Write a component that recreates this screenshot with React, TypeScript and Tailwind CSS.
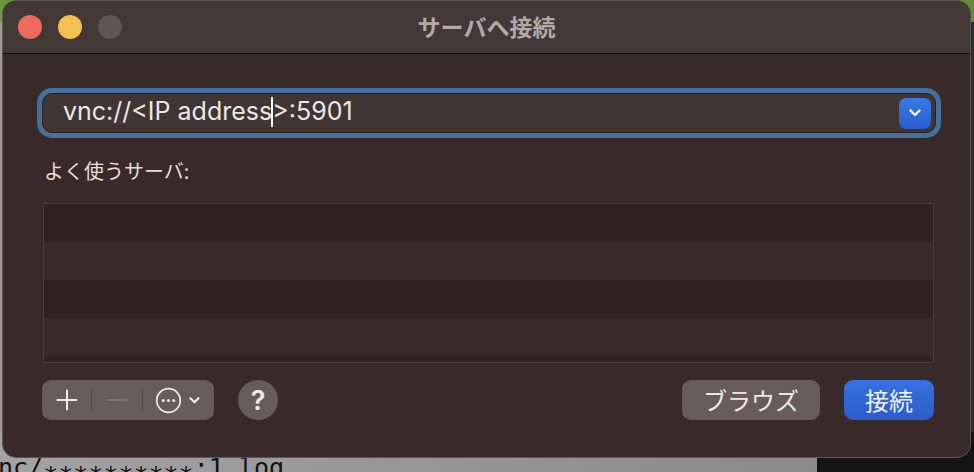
import React from 'react';

const jp = { fontFamily: '"Noto Sans CJK JP", "Noto Sans", sans-serif' };
const latin = { fontFamily: 'Inter, "Noto Sans CJK JP", sans-serif' };

const Chevron: React.FC<{ className?: string }> = ({ className }) => (
  <svg viewBox="0 0 14 10" className={className} fill="none">
    <path d="M2.5 2.5 L7 7 L11.5 2.5" stroke="currentColor" strokeWidth="2.4" strokeLinecap="round" strokeLinejoin="round" />
  </svg>
);

const TrafficLights: React.FC = () => (
  <div className="flex items-center gap-4 pl-[15px]">
    <span className="w-6 h-6 rounded-full bg-[#ec6a5e]" />
    <span className="w-6 h-6 rounded-full bg-[#f4bf4f]" />
    <span className="w-6 h-6 rounded-full bg-[#5f5654]" />
  </div>
);

const ServerField: React.FC = () => (
  <div className="ml-[39px] mr-[34px] rounded-[10px] shadow-[0_0_0_5px_#44709b] bg-[#3f3532] h-10 flex items-center pl-5 pr-1 border border-[#2a201e]">
    <div className="flex-1 text-[25px] text-[#ebe7e4] leading-none" style={latin}>
      vnc://&lt;IP address<span className="inline-block w-[2px] h-[30px] bg-white align-middle -mx-[1px] -mt-[3px]" />&gt;:5901
    </div>
    <button className="w-8 h-[31px] rounded-[7px] bg-gradient-to-b from-[#3a78e6] to-[#2a5ecf] flex items-center justify-center text-white">
      <Chevron className="w-[14px] h-[10px]" />
    </button>
  </div>
);

const FavoriteList: React.FC = () => {
  const rows = ['bg-[#2f2220]', 'bg-[#382b29]', 'bg-[#2f2220]', 'bg-[#382b29]'];
  return (
    <div className="ml-[40px] mr-[36px] h-[160px] border border-[#45403e] bg-[#2f2220] overflow-hidden">
      {rows.map((c, i) => (
        <div key={i} className={`${c} h-[38px]`} />
      ))}
    </div>
  );
};

const BottomBar: React.FC = () => (
  <div className="flex items-center ml-[39px] mr-[36px] mt-[17px] h-10">
    <div className="flex items-center h-10 w-[172px] rounded-[9px] bg-[#675c59] text-[#efebea]">
      <div className="w-[49px] flex justify-center">
        <svg viewBox="0 0 22 22" className="w-[22px] h-[22px]">
          <path d="M11 1.5v19M1.5 11h19" stroke="currentColor" strokeWidth="2" strokeLinecap="round" />
        </svg>
      </div>
      <span className="w-px h-[22px] bg-[#53494a]" />
      <div className="w-[50px] flex justify-center">
        <svg viewBox="0 0 22 22" className="w-[22px] h-[22px]">
          <path d="M1.5 11h19" stroke="#7f7573" strokeWidth="2" strokeLinecap="round" />
        </svg>
      </div>
      <span className="w-px h-[22px] bg-[#53494a]" />
      <div className="flex items-center pl-[12px] gap-[6px]">
        <svg viewBox="0 0 28 28" className="w-[27px] h-[27px]">
          <circle cx="14" cy="14" r="12.2" fill="none" stroke="currentColor" strokeWidth="1.8" />
          <circle cx="8.6" cy="14" r="1.6" fill="currentColor" />
          <circle cx="14" cy="14" r="1.6" fill="currentColor" />
          <circle cx="19.4" cy="14" r="1.6" fill="currentColor" />
        </svg>
        <Chevron className="w-[13px] h-[9px]" />
      </div>
    </div>
    <button
      className="ml-[24px] w-10 h-10 rounded-full bg-[#675c59] text-[#efebea] text-[27px] font-semibold flex items-center justify-center leading-none"
      style={latin}
    >
      ?
    </button>
    <div className="flex-1" />
    <button className="w-[138px] h-10 rounded-[9px] bg-[#675c59] text-[#ece8e6] text-[24px] leading-none" style={jp}>
      ブラウズ
    </button>
    <button
      className="ml-[24px] w-[90px] h-10 rounded-[9px] bg-gradient-to-b from-[#3572e0] to-[#2a5cc9] text-[#f2f2f7] text-[24px] leading-none"
      style={jp}
    >
      接続
    </button>
  </div>
);

const App: React.FC = () => {
  return (
    <div className="relative w-[974px] h-[472px] overflow-hidden bg-[#141414]">
      {/* desktop behind the sheet */}
      <div className="absolute inset-0 flex flex-col">
        <div className="h-[22px] flex">
          <div className="w-[30px] bg-[#6b9a3c]" />
          <div className="flex-1" />
          <div className="w-[30px] bg-[#5f8c35]" />
        </div>
        <div className="flex-1 flex">
          <div className="w-[30px] bg-[#9b9b9b]" />
          <div className="flex-1" />
          <div className="w-[30px] bg-[#2c2c2c]" />
        </div>
        <div className="h-[40px] flex">
          <div className="w-[817px] bg-gradient-to-r from-[#a3a3a3] to-[#8a8a8a] overflow-hidden">
            <div
              className="text-[25px] leading-none text-[#111] mt-[23px] -ml-[2px] whitespace-nowrap"
              style={{ fontFamily: '"DejaVu Sans Mono", monospace' }}
            >
              nc/<span className="relative top-[8px]">**********</span>:1.log
            </div>
          </div>
          <div className="flex-1 bg-[#141414]" />
        </div>
      </div>

      {/* sheet window */}
      <div className="relative ml-[2px] w-[969px] h-[458px] rounded-[14px] border border-[#5e5654] bg-[#382a28] overflow-hidden" style={jp}>
        <div className="relative h-[53px] bg-[#423835] border-b border-[#0f0a09] flex items-center">
          <TrafficLights />
          <div className="absolute inset-0 flex items-center justify-center text-[23px] font-bold text-[#b3a9a6] pb-[1px]">
            サーバへ接続
          </div>
        </div>
        <div className="pt-[39px]">
          <ServerField />
          <div className="ml-[41px] mt-[25px] h-[26px] text-[20px] leading-[26px] text-[#e4dfdc]">
            よく使うサーバ:
          </div>
          <div className="mt-[19px]">
            <FavoriteList />
          </div>
          <BottomBar />
        </div>
      </div>
    </div>
  );
};

export default App;
